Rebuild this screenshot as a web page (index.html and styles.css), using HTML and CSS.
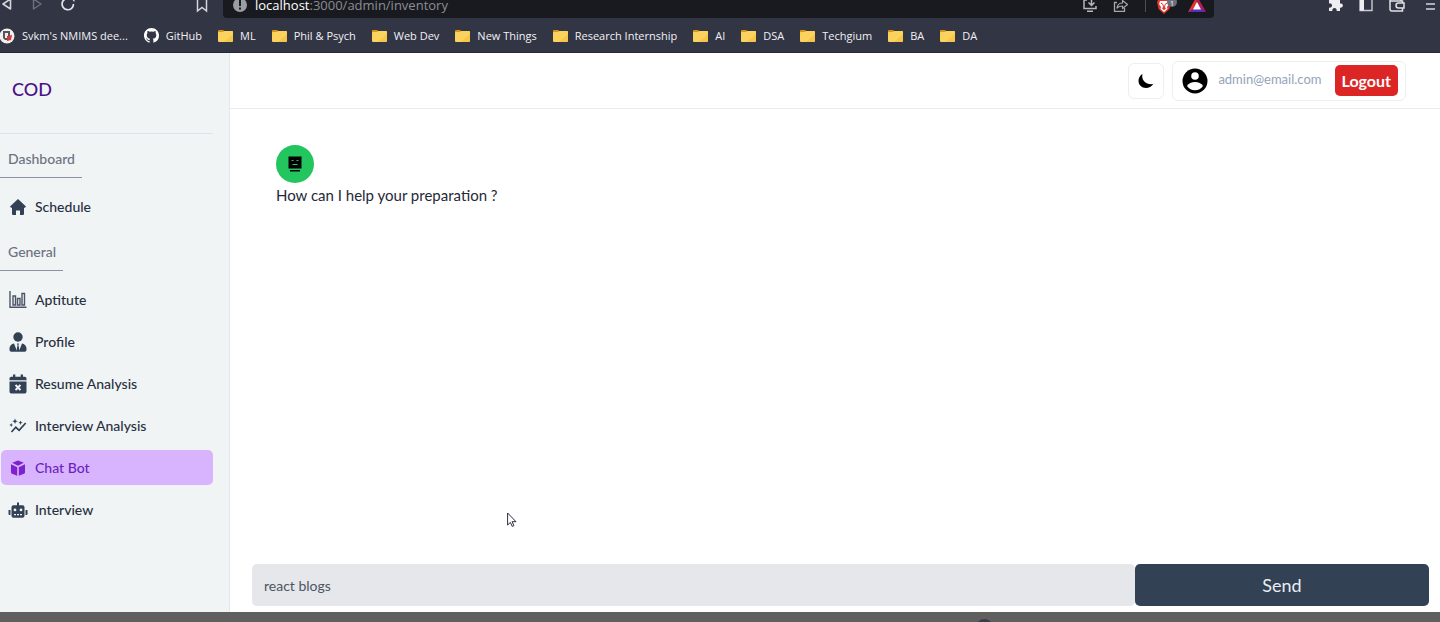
FILE: index.html
```html
<!DOCTYPE html>
<html lang="en">
<head>
<meta charset="utf-8">
<title>COD</title>
<link rel="stylesheet" href="styles.css">
</head>
<body>
<svg class="defs" aria-hidden="true">
  <symbol id="folder" viewBox="0 0 15 13">
    <path fill="#d9961f" d="M0 2a1 1 0 0 1 1-1h4l1 1h8a1 1 0 0 1 1 1v9H0z"/>
    <path fill="#fbd35c" d="M0 4a1 1 0 0 1 1-1h4l1-1h8a1 1 0 0 1 1 1v9a1 1 0 0 1-1 1H1a1 1 0 0 1-1-1z"/>
    <path fill="#f3bd3d" d="M15 5v7l-1 1H6z" opacity=".6"/>
  </symbol>
</svg>
<div class="window">
  <header class="browser">
    <div class="toolbar">
      <button class="tool nav" aria-label="Back"><svg width="14" height="16" viewBox="0 0 14 16"><path d="M10.500 3v10L3 8z" fill="none" stroke="#d5d6dc" stroke-width="1.600" stroke-linejoin="round"/></svg></button>
      <button class="tool nav" aria-label="Forward"><svg width="14" height="16" viewBox="0 0 14 16"><path d="M3.500 3v10L11 8z" fill="none" stroke="#6b6e7d" stroke-width="1.500" stroke-linejoin="round"/></svg></button>
      <button class="tool nav" aria-label="Reload"><svg width="16" height="16" viewBox="0 0 16 16"><path d="M13.500 8A5.700 5.700 0 1 1 10 2.800" fill="none" stroke="#e4e5ea" stroke-width="1.700"/><path d="M9.500 1h5v5z" fill="#e4e5ea"/></svg></button>
      <button class="tool mark" aria-label="Bookmark"><svg width="12" height="16" viewBox="0 0 12 16"><path d="M1.500 1v12L6 9.500l4.500 3.500V1z" fill="none" stroke="#d5d6dc" stroke-width="1.500"/></svg></button>
      <div class="address">
        <svg width="14" height="16" viewBox="0 0 14 16"><circle cx="7" cy="7" r="7" fill="#9b9da5"/><path d="M6 2h2v6H6zM6 9.500h2v2H6z" fill="#191a1f"/></svg>
        <span class="url"><b>localhost</b>:3000/admin/inventory</span>
        <svg width="16" height="16" viewBox="0 0 16 16"><path d="M5 2H2v8.500h12V8M5 13.300h6M9.500 0v7M6.500 4.500l3 3 3-3" fill="none" stroke="#b5b6bd" stroke-width="1.500"/></svg>
        <svg class="share" width="16" height="16" viewBox="0 0 16 16"><path d="M4 4.500H1.500v8.800h10V10" fill="none" stroke="#a5a6ae" stroke-width="1.300"/><path d="M4 10c.5-3.500 2.500-5 5.500-5V2.500l5 4-5 4V8C7 8 5.500 8.500 4 10z" fill="none" stroke="#a5a6ae" stroke-width="1.200" stroke-linejoin="round"/></svg>
        <i class="divider"></i>
        <svg class="shield" width="22" height="16" viewBox="0 0 22 16"><path d="M1 0h12l1 2-1.500 7L7 14 1.500 9 0 2z" fill="#e5332a"/><path d="M3 1h8l1 3-2 3 .5 2L7 12 3.500 9 4 7 2 4z" fill="#fff"/><path d="M4 3l2 1.500L7 10l1-5.500L10 3M5 8l2 1 2-1" fill="none" stroke="#e5332a"/><circle cx="15" cy="2" r="5" fill="#69707d"/><text x="13" y="6" class="count">1</text></svg>
        <svg class="bat" width="18" height="16" viewBox="0 0 18 16"><path d="M9-4L0 12h9l1-8z" fill="#e5332a"/><path d="M9-4l9 16-6-3-4-7z" fill="#b01f55"/><path d="M0 12h18l-5-3H5z" fill="#5b2ac0"/><path d="M9 2l4 7.500H5z" fill="#fff"/></svg>
      </div>
      <button class="tool ext" aria-label="Extensions"><svg width="16" height="16" viewBox="0 0 16 16"><path d="M2 2h3.500a2.200 2.200 0 1 1 4 0H13v3.500a2.200 2.200 0 1 1 0 4.200V13H9.500a2.200 2.200 0 1 0-4 0H2V9.500a2.200 2.200 0 1 0 0-4z" fill="#eeeef2"/></svg></button>
      <button class="tool" aria-label="Side panel"><svg width="14" height="16" viewBox="0 0 14 16"><path d="M1 0h12v12.500H1z" fill="none" stroke="#c9cad2" stroke-width="1.400"/><path d="M1 0h4v12.500H1z" fill="#eeeef2"/></svg></button>
      <button class="tool" aria-label="Wallet"><svg width="16" height="16" viewBox="0 0 16 16"><path d="M1 3h12.500v2M1 2v9a2 2 0 0 0 2 2h10.500v-3M1 3c0-2 1-2.500 2-2.500h9V3M9.500 5H15v5H9.500a2.500 2.500 0 0 1 0-5z" fill="none" stroke="#e0e1e6" stroke-width="1.500"/></svg></button>
      <button class="tool more" aria-label="Menu"><svg width="11" height="16" viewBox="0 0 11 16"><path d="M1 6h9M1 11h9" stroke="#d5d6dc" stroke-width="1.600"/></svg></button>
    </div>
    <nav class="bookmarks" aria-label="Bookmarks">
      <a href="#"><svg width="15" height="16" viewBox="0 0 15 16"><circle cx="7" cy="8" r="7.500" fill="#f0f0f0"/><path d="M3 3h7v6H8V5H5v5h3v2H5L3 10z" fill="#555"/><path d="M7 8l5-1-1 5-4 1z" fill="#d33a3a"/></svg>Svkm's NMIMS dee...</a>
      <a href="#"><svg width="15" height="15" viewBox="0 0 16 16"><path fill="#fff" d="M8 0C3.580 0 0 3.580 0 8c0 3.540 2.290 6.530 5.470 7.590.4.070.55-.17.55-.38 0-.19-.01-.82-.01-1.490-2.010.37-2.530-.49-2.690-.94-.09-.23-.48-.94-.82-1.130-.28-.15-.68-.52-.01-.53.63-.01 1.080.58 1.230.82.72 1.210 1.870.87 2.330.66.07-.52.28-.87.51-1.070-1.780-.2-3.640-.89-3.640-3.950 0-.87.31-1.590.82-2.150-.08-.2-.36-1.020.08-2.120 0 0 .67-.21 2.200.82a7.500 7.500 0 0 1 4 0c1.530-1.040 2.200-.82 2.200-.82.44 1.100.16 1.920.08 2.120.51.56.82 1.270.82 2.150 0 3.070-1.870 3.750-3.650 3.950.29.25.54.73.54 1.480 0 1.070-.01 1.930-.01 2.200 0 .21.15.46.55.38A8 8 0 0 0 16 8c0-4.420-3.580-8-8-8z"/></svg>GitHub</a>
      <a href="#"><svg width="15" height="13"><use href="#folder"/></svg>ML</a>
      <a href="#"><svg width="15" height="13"><use href="#folder"/></svg>Phil &amp; Psych</a>
      <a href="#"><svg width="15" height="13"><use href="#folder"/></svg>Web Dev</a>
      <a href="#"><svg width="15" height="13"><use href="#folder"/></svg>New Things</a>
      <a href="#"><svg width="15" height="13"><use href="#folder"/></svg>Research Internship</a>
      <a href="#"><svg width="15" height="13"><use href="#folder"/></svg>AI</a>
      <a href="#"><svg width="15" height="13"><use href="#folder"/></svg>DSA</a>
      <a href="#"><svg width="15" height="13"><use href="#folder"/></svg>Techgium</a>
      <a href="#"><svg width="15" height="13"><use href="#folder"/></svg>BA</a>
      <a href="#"><svg width="15" height="13"><use href="#folder"/></svg>DA</a>
    </nav>
  </header>

  <div class="app">
    <aside class="sidebar">
      <a class="brand" href="#">COD</a>
      <h2 class="section">Dashboard</h2>
      <nav class="menu" aria-label="Dashboard">
        <a href="#"><svg width="18" height="18" viewBox="0 0 18 18"><path d="M9 1l8 7.500-1 1.200h-1V16a1 1 0 0 1-1 1h-3v-4.500H7V17H4a1 1 0 0 1-1-1V9.700H2L1 8.500z"/></svg>Schedule</a>
      </nav>
      <h2 class="section">General</h2>
      <nav class="menu" aria-label="General">
        <a href="#"><svg width="18" height="18" viewBox="0 0 18 18"><path d="M1 0v16.300h16.500M4 5h2.500v9H4zM8.500 7.500H11v6.500H8.500zM13 2.500h2.500V14H13z" fill="none" stroke="#4b5565" stroke-width="1.400"/></svg>Aptitute</a>
        <a href="#"><svg width="18" height="20" viewBox="0 0 18 20"><circle cx="9" cy="5" r="4.700"/><path d="M5 11.500l2.800 7L9 14l1.200 4.500 2.800-7c2.600.4 4.500 2.300 4.500 5V18a1.800 1.800 0 0 1-1.800 1.800H2.300A1.800 1.800 0 0 1 .5 18v-1.500c0-2.700 1.900-4.600 4.500-5z"/><path d="M8 11.500h2l-.6 1.800.9 4.200L9 19l-1.300-1.500.9-4.200z"/></svg>Profile</a>
        <a href="#"><svg width="18" height="20" viewBox="0 0 18 20"><path fill-rule="evenodd" d="M4 .5h2.300v2.300h5.400V.5H14v2.300h1.800a1.700 1.700 0 0 1 1.700 1.700v1.800H.5V4.500a1.700 1.700 0 0 1 1.700-1.700H4zM.5 7.500h17v10.300a1.700 1.700 0 0 1-1.700 1.700H2.200a1.700 1.700 0 0 1-1.700-1.700zm5.300 4.200L7.700 13.500l-1.900 1.800 1.400 1.400L9 14.900l1.800 1.800 1.400-1.400-1.900-1.800 1.900-1.800-1.400-1.400L9 12.100l-1.800-1.800z"/></svg>Resume Analysis</a>
        <a href="#"><svg width="18" height="18" viewBox="0 0 18 18"><path d="M2.500 15l4.300-4.700 3.300 3L16.700 6" fill="none" stroke="#334155" stroke-width="1.700"/><path d="M6 1.500l.8 1.900 1.900.8-1.900.8L6 6.900 5.200 5l-1.900-.8 1.900-.8zM11.500 3.500l.6 1.600 1.600.6-1.600.6-.6 1.600-.6-1.600-1.600-.6 1.600-.6zM2.200 6l.6 1.400 1.400.6-1.400.6-.6 1.400-.6-1.400L.2 8l1.400-.6z"/></svg>Interview Analysis</a>
        <a href="#" class="active"><svg width="18" height="18" viewBox="0 0 18 18"><path d="M9 1.500l5.800 2.200L9 6.700 3.200 3.700zM2 5.200l6.200 3v8.500L3 14.800a1.500 1.500 0 0 1-1-1.300zM16 5.200l-6.200 3v8.500l5.200-1.900a1.500 1.500 0 0 0 1-1.300z"/></svg>Chat Bot</a>
        <a href="#"><svg width="20" height="18" viewBox="0 0 20 18"><path fill-rule="evenodd" d="M9 1.500h2v2.800h3.500A2 2 0 0 1 16.500 6.300v8.500a2 2 0 0 1-2 2h-9a2 2 0 0 1-2-2V6.300a2 2 0 0 1 2-2H9zM7 7.500a1.400 1.400 0 1 0 0 2.800 1.400 1.400 0 0 0 0-2.800zm6 0a1.400 1.400 0 1 0 0 2.800 1.400 1.400 0 0 0 0-2.800zM6 13v1.300h2V13zm3 0v1.300h2V13zm3 0v1.300h2V13zM.5 9h2v5h-1a1 1 0 0 1-1-1zM17.500 9h2v4a1 1 0 0 1-1 1h-1z"/></svg>Interview</a>
      </nav>
    </aside>

    <main class="content">
      <header class="topbar">
        <button class="theme" aria-label="Dark mode"><svg width="18" height="18" viewBox="0 0 18 18"><path d="M5.500 2C1 4.500.300 10.500 3.500 13.800c3.300 3.400 10 2.900 12.700-1.800C9.500 13 3.800 8.500 5.500 2z"/></svg></button>
        <div class="account">
          <svg width="26" height="26" viewBox="0 0 26 26"><circle cx="13" cy="13" r="12.500"/><circle cx="13" cy="8" r="3.800" fill="#fff"/><path d="M5 18c1.500-2.600 4.600-3.900 8-3.900s6.500 1.300 8 3.900a9.600 9.600 0 0 1-16 0z" fill="#fff"/></svg>
          <span class="email">admin@email.com</span>
          <button class="logout">Logout</button>
        </div>
      </header>
      <section class="chat">
        <span class="avatar"><svg width="14" height="16" viewBox="0 0 14 16"><path d="M.5.500h13v12h-13zM2 14h10v1.500H2z"/><path d="M3.500 4.500h2M8.500 4.500h2M4.500 8.500h5" stroke="#22c55e" stroke-width="1"/></svg></span>
        <p class="message">How can I help your preparation ?</p>
      </section>
      <form class="composer">
        <input type="text" value="react blogs" aria-label="Message">
        <button type="button">Send</button>
      </form>
    </main>
  </div>
  <footer class="strip"><i class="knob"></i></footer>
  <svg class="cursor" width="10" height="16" viewBox="0 0 10 16"><path d="M.6 1v12l2.800-2.600 1.800 4 1.700-.8L5.100 9.700H9z" fill="#fff" stroke="#2a2f3d"/></svg>
</div>
</body>
</html>
```
FILE: styles.css
```css
* { box-sizing: border-box; }
body { margin: 0; font-family: Lato, "Liberation Sans", sans-serif; color: #1f2937; }
a { color: inherit; text-decoration: none; }
button { font: inherit; border: 0; padding: 0; background: none; }
svg { display: block; flex: none; }
.defs { position: absolute; width: 0; height: 0; }
.window { position: relative; display: flex; flex-direction: column; min-height: 100vh; }

.browser { background: #323544; border-bottom: 1px solid #262835; color: #f1f1f4; font-family: "Open Sans", "Noto Sans", sans-serif; }
.toolbar { display: flex; align-items: flex-start; gap: 16px; height: 18px; padding-right: 4px; }
.tool { height: 16px; flex: none; margin-top: -2px; }
.toolbar .nav { margin-top: -4px; }
.toolbar .mark { margin-left: 104px; }
.address { flex: 1; display: flex; align-items: flex-start; height: 18px; margin-left: -1px; padding: 0 8px 0 10px; background: #191a1f; border-radius: 0 0 4px 4px; }
.address > svg { margin-top: -2px; }
.url { flex: 1; margin-left: 8px; font-size: 13px; line-height: 11px; color: #8b8d96; }
.url b { font-weight: 400; color: #fff; }
.address .share { margin-left: 15px; }
.divider { width: 1px; height: 12px; margin: 0 11px 0 16px; background: #4b4d57; }
.address .shield { margin-right: 9px; margin-top: 0; }
.address .bat { margin-top: 0; }
.count { font-size: 7px; fill: #fff; }
.toolbar .ext { margin-left: 97px; }
.toolbar .more { margin-left: 4px; }
.bookmarks { display: flex; align-items: center; gap: 16px; height: 34px; padding-top: 1px; font-size: 11px; line-height: 18px; white-space: nowrap; }
.bookmarks a { display: flex; align-items: center; gap: 7px; }

.app { flex: 1; display: flex; }
.sidebar { width: 230px; flex: none; padding-right: 16px; background: #f0f4f5; border-right: 1px solid #e5e7eb; font-size: 14px; line-height: 20px; }
.brand { display: block; height: 81px; padding: 24px 12px; border-bottom: 1px solid #dfe2e6; font-size: 18px; line-height: 24px; font-weight: 500; color: #4c1187; }
.section { width: fit-content; margin: 15px 0 11px; padding: 0 7px 8px 8px; border-bottom: 1px solid #8a94a6; font-size: 14px; line-height: 20px; font-weight: 500; color: #6b7280; }
.menu { display: flex; flex-direction: column; gap: 7px; }
.menu + .section { margin-top: 18px; }
.menu a { display: grid; grid-template-columns: 20px 1fr; align-items: center; column-gap: 7px; height: 35px; margin-left: 1px; padding: 0 7px; border-radius: 5px; font-weight: 500; color: #27303f; }
.menu svg { justify-self: center; fill: #334155; }
.menu .active { background: #d8b4fe; color: #6d1fc0; }
.menu .active svg { fill: #7e22ce; }

.content { flex: 1; min-width: 0; display: flex; flex-direction: column; background: #fff; }
.topbar { display: flex; justify-content: flex-end; align-items: center; gap: 8px; height: 56px; padding-right: 34px; border-bottom: 1px solid #e9ebee; }
.theme { display: grid; place-items: center; width: 36px; height: 36px; border: 1px solid #eceef1; border-radius: 6px; }
.account { display: flex; align-items: center; height: 40px; padding: 0 7px 0 9px; border: 1px solid #eceef1; border-radius: 6px; }
.email { margin: 0 13px 0 10px; padding-bottom: 3px; font-size: 13px; line-height: 20px; color: #94a3b8; }
.logout { height: 31px; padding: 0 7px; border-radius: 5px; background: #dc2626; color: #fff; font-size: 16px; font-weight: 700; }
.chat { flex: 1; padding: 36px 46px; }
.avatar { display: grid; place-items: center; width: 38px; height: 38px; border-radius: 50%; background: #22c55e; }
.message { margin: 1px 0 0; font-size: 15px; line-height: 22px; }
.composer { display: grid; grid-template-columns: 3fr 1fr; padding: 0 11px 6px 22px; }
.composer input { min-width: 0; height: 42px; padding: 0 12px; border: 0; border-radius: 5px; background: #e5e7eb; color: #4b5563; font: 14px Lato, sans-serif; }
.composer button { height: 42px; border-radius: 5px; background: #334155; color: #e8edf3; font-size: 18px; }

.strip { position: relative; height: 10px; overflow: hidden; background: #5f5f5f; }
.knob { position: absolute; left: 976px; top: 7px; width: 17px; height: 17px; border-radius: 50%; background: #3c3d4c; }
.cursor { position: absolute; left: 507px; top: 512px; }
```
